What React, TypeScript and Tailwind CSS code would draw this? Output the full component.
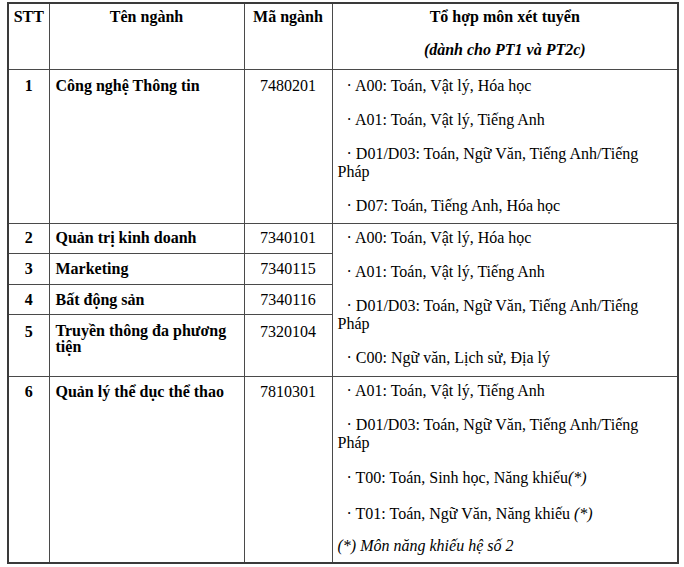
const cell = 'border border-[#4a4a4a] align-top';

function Item({ children, className = '' }: { children: React.ReactNode; className?: string }) {
  return <p className={`indent-[9px] ${className}`}>· {children}</p>;
}

export default function App() {
  return (
    <div className="w-[684px] h-[567px] bg-white pt-[2px] pl-[7px]">
      <table className="w-[670px] table-fixed border-collapse border-2 border-[#3a3a3a] text-black text-[16px] leading-[18px] font-['Liberation_Serif',serif]">
        <colgroup>
          <col className="w-[41px]" />
          <col className="w-[195px]" />
          <col className="w-[88px]" />
          <col className="w-[346px]" />
        </colgroup>
        <thead>
          <tr className="h-[66px]">
            <th className={`${cell} pt-[4px] text-center font-bold`}>STT</th>
            <th className={`${cell} pt-[4px] text-center font-bold`}>Tên ngành</th>
            <th className={`${cell} pt-[4px] text-center font-bold`}>Mã ngành</th>
            <th className={`${cell} pt-[4px] text-center font-bold`}>
              <p>Tổ hợp môn xét tuyển</p>
              <p className="mt-[15px] italic">(dành cho PT1 và PT2c)</p>
            </th>
          </tr>
        </thead>
        <tbody>
          <tr className="h-[154px]">
            <td className={`${cell} pt-[7px] text-center font-bold`}>1</td>
            <td className={`${cell} pt-[7px] pl-[6px] font-bold`}>Công nghệ Thông tin</td>
            <td className={`${cell} pt-[7px] text-center`}>7480201</td>
            <td className={`${cell} pt-[7px] pb-[6px] pl-[5px] pr-[6px]`}>
              <div className="flex flex-col gap-[16px]">
                <Item>A00: Toán, Vật lý, Hóa học</Item>
                <Item>A01: Toán, Vật lý, Tiếng Anh</Item>
                <Item>D01/D03: Toán, Ngữ Văn, Tiếng Anh/Tiếng Pháp</Item>
                <Item>D07: Toán, Tiếng Anh, Hóa học</Item>
              </div>
            </td>
          </tr>
          <tr className="h-[30px]">
            <td className={`${cell} pt-[5px] text-center font-bold`}>2</td>
            <td className={`${cell} pt-[5px] pl-[6px] font-bold`}>Quản trị kinh doanh</td>
            <td className={`${cell} pt-[5px] text-center`}>7340101</td>
            <td rowSpan={4} className={`${cell} pt-[5px] pb-[7px] pl-[5px] pr-[6px]`}>
              <div className="flex flex-col gap-[16px]">
                <Item>A00: Toán, Vật lý, Hóa học</Item>
                <Item>A01: Toán, Vật lý, Tiếng Anh</Item>
                <Item>D01/D03: Toán, Ngữ Văn, Tiếng Anh/Tiếng Pháp</Item>
                <Item>C00: Ngữ văn, Lịch sử, Địa lý</Item>
              </div>
            </td>
          </tr>
          <tr className="h-[31px]">
            <td className={`${cell} pt-[6px] text-center font-bold`}>3</td>
            <td className={`${cell} pt-[6px] pl-[6px] font-bold`}>Marketing</td>
            <td className={`${cell} pt-[6px] text-center`}>7340115</td>
          </tr>
          <tr className="h-[30px]">
            <td className={`${cell} pt-[6px] text-center font-bold`}>4</td>
            <td className={`${cell} pt-[6px] pl-[6px] font-bold`}>Bất động sản</td>
            <td className={`${cell} pt-[6px] text-center`}>7340116</td>
          </tr>
          <tr className="h-[62px]">
            <td className={`${cell} pt-[8px] text-center font-bold`}>5</td>
            <td className={`${cell} pt-[8px] pl-[6px] pr-[4px] font-bold leading-[16px]`}>Truyền thông đa phương tiện</td>
            <td className={`${cell} pt-[8px] text-center`}>7320104</td>
          </tr>
          <tr className="h-[187px]">
            <td className={`${cell} pt-[6px] text-center font-bold`}>6</td>
            <td className={`${cell} pt-[6px] pl-[6px] font-bold`}>Quản lý thể dục thể thao</td>
            <td className={`${cell} pt-[6px] text-center`}>7810301</td>
            <td className={`${cell} pt-[5px] pb-[6px] pl-[5px] pr-[6px]`}>
              <Item>A01: Toán, Vật lý, Tiếng Anh</Item>
              <Item className="mt-[16px]">D01/D03: Toán, Ngữ Văn, Tiếng Anh/Tiếng Pháp</Item>
              <Item className="mt-[17px]">
                T00: Toán, Sinh học, Năng khiếu<i>(*)</i>
              </Item>
              <Item className="mt-[18px]">
                T01: Toán, Ngữ Văn, Năng khiếu <i>(*)</i>
              </Item>
              <p className="mt-[14px] italic">(*) Môn năng khiếu hệ số 2</p>
            </td>
          </tr>
        </tbody>
      </table>
    </div>
  );
}
